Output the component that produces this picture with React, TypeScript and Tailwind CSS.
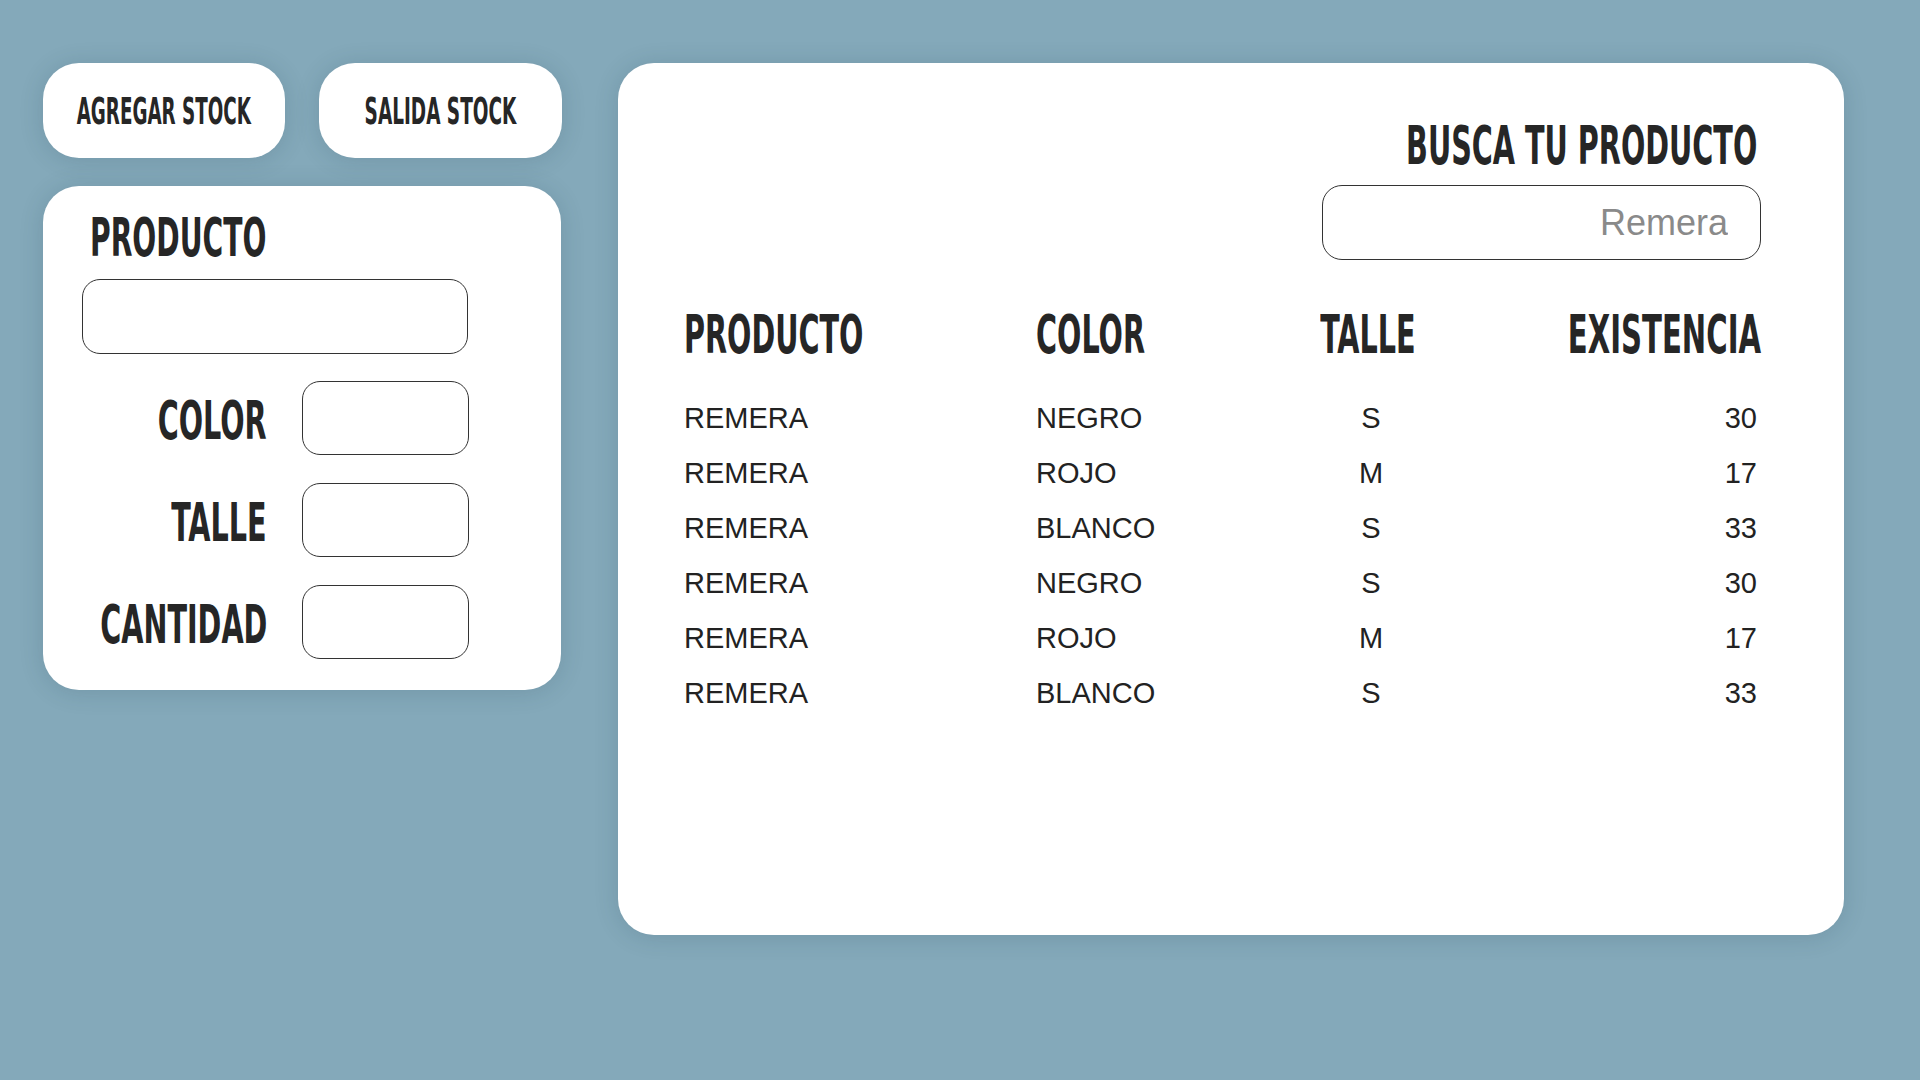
import React, { useState } from 'react';

const DISPLAY = "font-['Liberation_Sans_Narrow','DejaVu_Sans_Condensed',sans-serif] font-bold text-[#262626]";
const BODY = "font-['Liberation_Sans','Arial',sans-serif]";
const SHADOW = 'shadow-[0_2px_24px_rgba(20,50,70,0.16)]';

const STOCK = [
  { producto: 'REMERA', color: 'NEGRO', talle: 'S', existencia: 30 },
  { producto: 'REMERA', color: 'ROJO', talle: 'M', existencia: 17 },
  { producto: 'REMERA', color: 'BLANCO', talle: 'S', existencia: 33 },
  { producto: 'REMERA', color: 'NEGRO', talle: 'S', existencia: 30 },
  { producto: 'REMERA', color: 'ROJO', talle: 'M', existencia: 17 },
  { producto: 'REMERA', color: 'BLANCO', talle: 'S', existencia: 33 },
];

const FIELDS = ['COLOR', 'TALLE', 'CANTIDAD'];

const App: React.FC = () => {
  const [query, setQuery] = useState('');

  return (
    <div className="min-h-screen bg-[#84a9ba] flex items-start pl-[43px] pt-[63px]">
      {/* Left column */}
      <div className="w-[518px] flex flex-col gap-[28px]">
        <div className="flex gap-[34px]">
          <button className={`w-[242px] h-[95px] rounded-[36px] bg-white ${SHADOW} flex items-center justify-center`}>
            <span className={`${DISPLAY} inline-block text-[38px] leading-none scale-x-[0.535] whitespace-nowrap`}>AGREGAR STOCK</span>
          </button>
          <button className={`w-[243px] h-[95px] rounded-[36px] bg-white ${SHADOW} flex items-center justify-center`}>
            <span className={`${DISPLAY} inline-block text-[38px] leading-none scale-x-[0.54] whitespace-nowrap`}>SALIDA STOCK</span>
          </button>
        </div>

        <div className={`h-[504px] bg-white rounded-[36px] ${SHADOW} pt-[25px] pl-[39px]`}>
          <div className="pl-[8px]">
            <span className={`${DISPLAY} inline-block text-[54px] leading-none origin-left scale-x-[0.58]`}>PRODUCTO</span>
          </div>
          <input className={`${BODY} mt-[14px] block w-[386px] h-[75px] rounded-[18px] border border-[#333] px-5 text-[28px] outline-none`} />
          <div className="mt-[27px] flex flex-col gap-[28px]">
            {FIELDS.map((f) => (
              <div key={f} className="flex items-center">
                <div className="w-[185px] pt-[5px] flex justify-end">
                  <span className={`${DISPLAY} inline-block shrink-0 text-[54px] leading-none origin-right scale-x-[0.59] whitespace-nowrap`}>{f}</span>
                </div>
                <input className={`${BODY} ml-[35px] w-[167px] h-[74px] rounded-[18px] border border-[#333] px-4 text-[28px] outline-none`} />
              </div>
            ))}
          </div>
        </div>
      </div>

      {/* Stock table */}
      <div className={`ml-[57px] w-[1226px] h-[872px] bg-white rounded-[36px] ${SHADOW} pt-[56px] pl-[66px] pr-[83px]`}>
        <div className="flex flex-col items-end">
          <span className={`${DISPLAY} inline-block mr-[4px] text-[54px] leading-none origin-right scale-x-[0.59] whitespace-nowrap`}>BUSCA TU PRODUCTO</span>
          <input
            value={query}
            onChange={(e) => setQuery(e.target.value)}
            placeholder="Remera"
            className={`${BODY} mt-[12px] w-[439px] h-[75px] rounded-[20px] border border-[#333] pr-[32px] pl-5 text-right text-[36px] text-[#222] placeholder:text-[#8a8a8a] outline-none`}
          />
        </div>

        <div className="mt-[48px] grid grid-cols-[352px_222px_220px_minmax(0,1fr)]">
          <div className="flex"><span className={`${DISPLAY} inline-block shrink-0 text-[54px] leading-none origin-left scale-x-[0.59]`}>PRODUCTO</span></div>
          <div className="flex"><span className={`${DISPLAY} inline-block shrink-0 text-[54px] leading-none origin-left scale-x-[0.59]`}>COLOR</span></div>
          <div className="flex justify-center"><span className={`${DISPLAY} inline-block shrink-0 text-[54px] leading-none scale-x-[0.59]`}>TALLE</span></div>
          <div className="flex justify-end"><span className={`${DISPLAY} inline-block shrink-0 text-[54px] leading-none origin-right scale-x-[0.6]`}>EXISTENCIA</span></div>
        </div>

        <div className={`${BODY} mt-[29px] grid grid-cols-[352px_222px_220px_minmax(0,1fr)] text-[29px] leading-[55px] text-[#222]`}>
          {STOCK.map((row, i) => (
            <React.Fragment key={i}>
              <div>{row.producto}</div>
              <div>{row.color}</div>
              <div className="text-center pl-[6px]">{row.talle}</div>
              <div className="text-right pr-[4px]">{row.existencia}</div>
            </React.Fragment>
          ))}
        </div>
      </div>
    </div>
  );
};

export default App;
